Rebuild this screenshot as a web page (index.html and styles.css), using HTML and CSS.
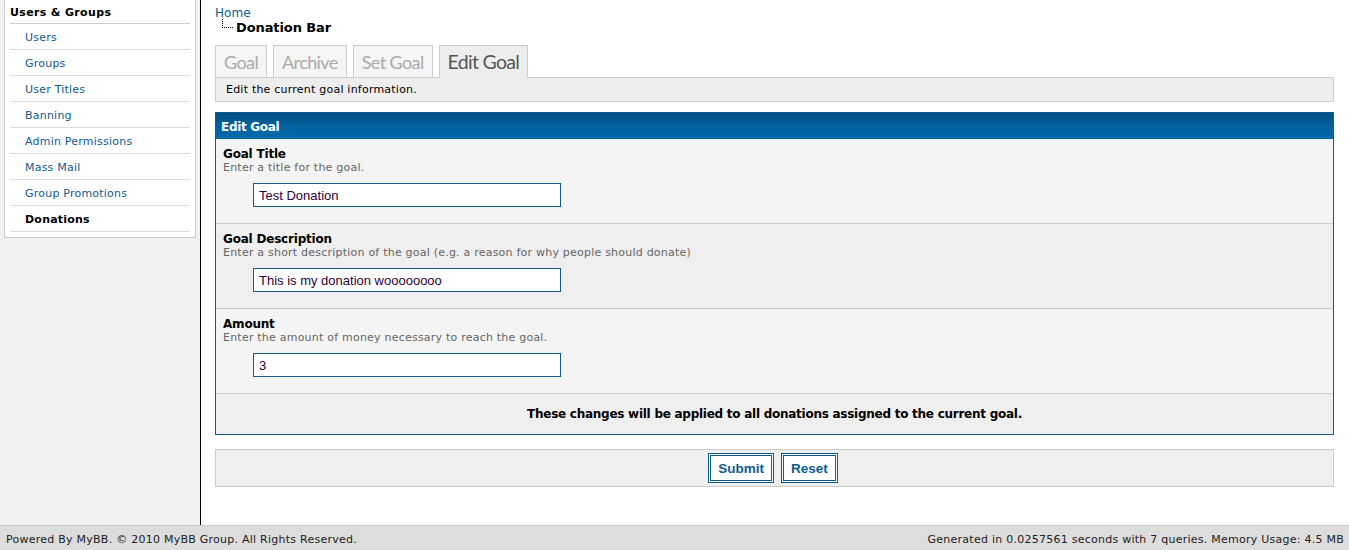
FILE: index.html
```html
<!DOCTYPE html>
<html>
<head>
<meta charset="utf-8">
<title>Donation Bar</title>
<link rel="stylesheet" href="styles.css">
</head>
<body>
<div class="page">
  <div class="sidebar">
    <div class="side-box">
      <div class="side-title">Users &amp; Groups</div>
      <ul class="side-menu">
        <li><a href="#">Users</a></li>
        <li><a href="#">Groups</a></li>
        <li><a href="#">User Titles</a></li>
        <li><a href="#">Banning</a></li>
        <li><a href="#">Admin Permissions</a></li>
        <li><a href="#">Mass Mail</a></li>
        <li><a href="#">Group Promotions</a></li>
        <li class="active"><a href="#">Donations</a></li>
      </ul>
    </div>
  </div>
  <div class="main">
    <div class="breadcrumb">
      <a href="#" class="crumb-home">Home</a>
      <div class="crumb-current"><span class="tree"></span>Donation Bar</div>
    </div>
    <div class="tabs">
      <a href="#" class="tab">Goal</a>
      <a href="#" class="tab">Archive</a>
      <a href="#" class="tab">Set Goal</a>
      <a href="#" class="tab tab-active">Edit Goal</a>
    </div>
    <div class="tab-desc">Edit the current goal information.</div>

    <div class="form-box">
      <div class="form-head">Edit Goal</div>
      <div class="form-row row-a">
        <div class="label">Goal Title</div>
        <div class="desc">Enter a title for the goal.</div>
        <div class="field"><input class="text-input" type="text" value="Test Donation"></div>
      </div>
      <div class="form-row row-b">
        <div class="label">Goal Description</div>
        <div class="desc">Enter a short description of the goal (e.g. a reason for why people should donate)</div>
        <div class="field"><input class="text-input" type="text" value="This is my donation woooooooo"></div>
      </div>
      <div class="form-row row-a">
        <div class="label">Amount</div>
        <div class="desc">Enter the amount of money necessary to reach the goal.</div>
        <div class="field"><input class="text-input" type="text" value="3"></div>
      </div>
      <div class="form-note">These changes will be applied to all donations assigned to the current goal.</div>
    </div>

    <div class="buttons">
      <button class="btn" type="button">Submit</button>
      <button class="btn" type="button">Reset</button>
    </div>
  </div>
</div>
<div class="footer">
  <span>Powered By MyBB. &copy; 2010 MyBB Group. All Rights Reserved.</span>
  <span>Generated in 0.0257561 seconds with 7 queries. Memory Usage: 4.5 MB</span>
</div>
</body>
</html>
```

FILE: styles.css
```css
html, body {
  margin: 0;
  padding: 0;
}
body {
  font-family: "DejaVu Sans", Verdana, sans-serif;
  font-size: 11px;
  letter-spacing: 0.22px;
  color: #000;
  background: #fff;
}
a {
  color: #0f5c8e;
  text-decoration: none;
}
.page {
  display: flex;
  min-height: 525px;
}
.sidebar {
  width: 200px;
  flex: 0 0 200px;
  background: #f1f1f1;
  border-right: 1px solid #000;
}
.side-box {
  margin: -1px 4px 0 4px;
  background: #fff;
  border: 1px solid #ccc;
  padding: 0 5px 5px 5px;
}
.side-title {
  font-weight: bold;
  letter-spacing: 0.35px;
  height: 22px;
  line-height: 24px;
  border-bottom: 1px solid #ccc;
  margin-top: 1px;
}
.side-menu {
  list-style: none;
  margin: 0;
  padding: 0;
}
.side-menu li {
  height: 25px;
  line-height: 27px;
  border-bottom: 1px solid #ddd;
  padding-left: 15px;
}
.side-menu li.active a {
  color: #000;
  font-weight: bold;
}
.main {
  flex: 1;
  padding: 5px 15px 38px 14px;
  min-width: 0;
}
.breadcrumb {
  font-size: 12px;
  line-height: 15px;
  letter-spacing: 0.1px;
}
.crumb-home {
  display: block;
  line-height: 17px;
  height: 15px;
}
.crumb-current {
  display: flex;
  align-items: center;
  font-weight: bold;
  font-size: 13px;
  letter-spacing: -0.1px;
}
.tree {
  display: inline-block;
  width: 10px;
  height: 8px;
  margin: -8px 3px 0 7px;
  border-left: 1px dotted #000;
  border-bottom: 1px dotted #000;
}
.tabs {
  display: flex;
  gap: 6px;
  margin-top: 10px;
  height: 32px;
  position: relative;
  z-index: 1;
}
.tab {
  display: block;
  font-family: "Lato", "Open Sans", sans-serif;
  font-size: 18px;
  letter-spacing: -0.6px;
  color: #aaa;
  background: #f5f5f5;
  border: 1px solid #ccc;
  border-bottom: 0;
  height: 31px;
  line-height: 32px;
  padding: 0 8px 0 8px;
}
.tab-active {
  color: #555;
  background: #eee;
  font-size: 19.5px;
  letter-spacing: -0.7px;
  height: 32px;
}
.tab-desc {
  background: #eee;
  border: 1px solid #ccc;
  height: 23px;
  line-height: 24px;
  padding-left: 10px;
}
.form-box {
  margin-top: 10px;
  border: 1px solid #0f5c8e;
}
.form-head {
  background: linear-gradient(to bottom, #035081 0%, #0263a0 55%, #006bab 100%);
  color: #fff;
  font-weight: bold;
  font-size: 12px;
  letter-spacing: -0.3px;
  height: 26px;
  line-height: 28px;
  padding-left: 5px;
}
.form-row {
  padding: 8px 7px 16px 7px;
  border-bottom: 1px solid #ccc;
}
.row-a { background: #f4f4f4; }
.row-b { background: #efefef; }
.label {
  font-weight: bold;
  font-size: 12px;
  letter-spacing: -0.2px;
  line-height: 14px;
}
.desc {
  color: #666;
  font-size: 11px;
  line-height: 14px;
}
.field {
  padding: 8px 0 0 30px;
  line-height: 0;
}
.text-input {
  box-sizing: border-box;
  width: 308px;
  height: 24px;
  border: 1px solid #0f5c8e;
  padding: 0 5px;
  font-family: "Liberation Sans", Arial, sans-serif;
  font-size: 13px;
  letter-spacing: 0;
  color: #303;
  background: #fff;
  margin: 0;
  outline: none;
  vertical-align: top;
}
.form-note {
  background: #efefef;
  height: 40px;
  line-height: 41px;
  text-align: center;
  font-weight: bold;
  font-size: 12px;
  letter-spacing: -0.26px;
}
.buttons {
  margin-top: 14px;
  background: #efefef;
  border: 1px solid #ccc;
  height: 36px;
  display: flex;
  justify-content: center;
  align-items: center;
  gap: 7px;
  padding-right: 3px;
}
.btn {
  box-sizing: border-box;
  height: 30px;
  padding: 0 7px;
  border: 3px double #0f5c8e;
  background: #fff;
  color: #0f5c8e;
  font-family: "Liberation Sans", Arial, sans-serif;
  font-weight: bold;
  font-size: 13.5px;
  letter-spacing: 0;
  margin: 0;
}
.footer {
  display: flex;
  justify-content: space-between;
  background: #ddd;
  border-top: 1px solid #ccc;
  height: 24px;
  line-height: 27px;
  padding: 0 5px 0 6px;
  color: #222;
  letter-spacing: 0.25px;
}
```
